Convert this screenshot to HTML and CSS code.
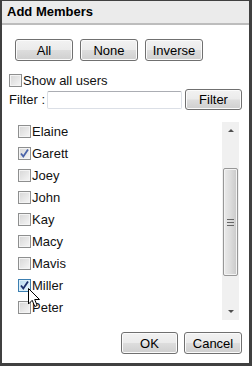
FILE: index.html
```html
<!DOCTYPE html>
<html lang="en">
  <head>
    <meta charset="UTF-8" />
    <title>Add Members</title>
    <link rel="stylesheet" href="styles.css">
  </head>
  <body>
    <div class="dialog">
      <div class="title">Add Members</div>
      <div class="content">
        <div class="select-row">
          <button class="btn">All</button>
          <button class="btn">None</button>
          <button class="btn">Inverse</button>
        </div>
        <div class="check-row"><span class="box"></span>Show all users</div>
        <div class="filter-row">
          <span class="filter-label">Filter :</span>
          <input class="filter-input" type="text">
          <button class="btn btn-filter">Filter</button>
        </div>
        <div class="list">
          <ul class="members">
            <li><span class="box"></span>Elaine</li>
            <li><span class="box checked"><svg viewBox="0 0 11 11"><path d="M2 5.5 L4.3 8.5 L9 1.5" /></svg></span>Garett</li>
            <li><span class="box"></span>Joey</li>
            <li><span class="box"></span>John</li>
            <li><span class="box"></span>Kay</li>
            <li><span class="box"></span>Macy</li>
            <li><span class="box"></span>Mavis</li>
            <li><span class="box checked hover"><svg viewBox="0 0 11 11"><path d="M2 5.5 L4.3 8.5 L9 1.5" /></svg></span>Miller</li>
            <li><span class="box"></span>Peter</li>
          </ul>
          <div class="scrollbar">
            <div class="arrow"><span class="tri up"></span></div>
            <div class="track">
              <div class="thumb"><span class="grip"></span></div>
            </div>
            <div class="arrow"><span class="tri down"></span></div>
          </div>
        </div>
        <div class="actions">
          <button class="btn btn-ok">OK</button>
          <button class="btn btn-cancel">Cancel</button>
        </div>
      </div>
      <!-- mouse pointer over Miller -->
      <svg class="cursor" width="13" height="20" viewBox="0 0 13 20">
        <path d="M0.5 0.5 L0.5 16 L4.2 12.3 L6.8 18.5 L9.2 17.5 L6.7 11.5 L11.5 11.5 Z" fill="#fff" stroke="#000" stroke-width="1" stroke-linejoin="round" />
      </svg>
    </div>
  </body>
</html>
```
FILE: styles.css
```css
* {
  box-sizing: border-box;
}
body {
  margin: 0;
  font-family: "Liberation Sans", Arial, sans-serif;
  font-size: 13px;
  color: #111;
}
.dialog {
  position: relative;
  width: 252px;
  height: 366px;
  background: #fff;
  border-style: solid;
  border-color: #404040;
  border-width: 1px 3px 3px 2px;
  display: flex;
  flex-direction: column;
}
.title {
  height: 24px;
  padding-left: 5px;
  line-height: 22px;
  font-weight: bold;
  color: #000;
  background: #ebebeb;
  border-bottom: 2px solid #bdbdbd;
}
.content {
  padding: 0 7px;
  display: flex;
  flex-direction: column;
}
.btn {
  font-family: "Liberation Sans", Arial, sans-serif;
  font-size: 13px;
  color: #000;
  height: 22px;
  padding: 0;
  border: 1px solid #707070;
  border-radius: 3px;
  background: linear-gradient(#f2f2f2 0%, #ebebeb 48%, #dddddd 52%, #cfcfcf 100%);
  box-shadow: inset 0 0 0 1px #fbfbfb;
}
.select-row {
  margin-top: 14px;
  padding-left: 6px;
  display: flex;
  gap: 7px;
}
.select-row .btn {
  width: 58px;
}
.check-row {
  margin-top: 11px;
  height: 16px;
  display: flex;
  align-items: center;
}
.box {
  width: 13px;
  height: 13px;
  margin-right: 1px;
  border: 1px solid #8e8f8f;
  background: linear-gradient(135deg, #d6d6d6, #f6f6f6);
  box-shadow: inset 0 0 0 1px #f4f4f4;
  flex: none;
  display: flex;
}
.box svg {
  width: 11px;
  height: 11px;
}
.box path {
  fill: none;
  stroke: #4a63a8;
  stroke-width: 1.8;
}
.box.hover {
  border-color: #3c7fb1;
  background: linear-gradient(135deg, #b9dcf0, #e9f6fd);
  box-shadow: inset 0 0 0 1px #def0fa;
}
.box.hover path {
  stroke: #1c2f6b;
}
.filter-row {
  margin-top: 1px;
  height: 21px;
  display: flex;
  align-items: center;
}
.filter-label {
  flex: none;
  white-space: nowrap;
  margin-right: 2px;
}
.filter-input {
  flex: 1;
  min-width: 0;
  height: 18px;
  margin-right: 3px;
  border: 1px solid #dbdfe6;
  border-top-color: #abadb3;
  border-radius: 2px;
}
.btn-filter {
  width: 57px;
  height: 21px;
  flex: none;
}
.list {
  margin-top: 10px;
  height: 202px;
  display: flex;
}
.members {
  list-style: none;
  margin: 0;
  padding: 0 0 0 9px;
  flex: 1;
  overflow: hidden;
}
.members li {
  height: 22px;
  display: flex;
  align-items: center;
}
.scrollbar {
  width: 17px;
  margin: 2px 3px 2px 0;
  background: #f0f0f0;
  display: flex;
  flex-direction: column;
}
.arrow {
  height: 17px;
  display: flex;
  align-items: center;
  justify-content: center;
}
.tri {
  width: 0;
  height: 0;
  border-left: 3px solid transparent;
  border-right: 3px solid transparent;
}
.tri.up {
  border-bottom: 3px solid #505050;
}
.tri.down {
  border-top: 3px solid #505050;
}
.track {
  flex: 1;
  padding: 29px 1px 0;
}
.thumb {
  height: 108px;
  border: 1px solid #979797;
  border-radius: 2px;
  background: linear-gradient(90deg, #eaeaea, #dcdcdc 50%, #c9c9c9);
  box-shadow: inset 0 0 0 1px #f3f3f3;
  display: flex;
  align-items: center;
  justify-content: center;
}
.grip {
  width: 7px;
  height: 7px;
  border-top: 1px solid #666;
  border-bottom: 1px solid #666;
  background: linear-gradient(#fff0 40%, #666 40%, #666 60%, #fff0 60%);
}
.actions {
  margin-top: 10px;
  display: flex;
  justify-content: flex-end;
  gap: 6px;
}
.btn-ok {
  width: 57px;
}
.btn-cancel {
  width: 58px;
}
.cursor {
  position: absolute;
  left: 26px;
  top: 287px;
}
```
